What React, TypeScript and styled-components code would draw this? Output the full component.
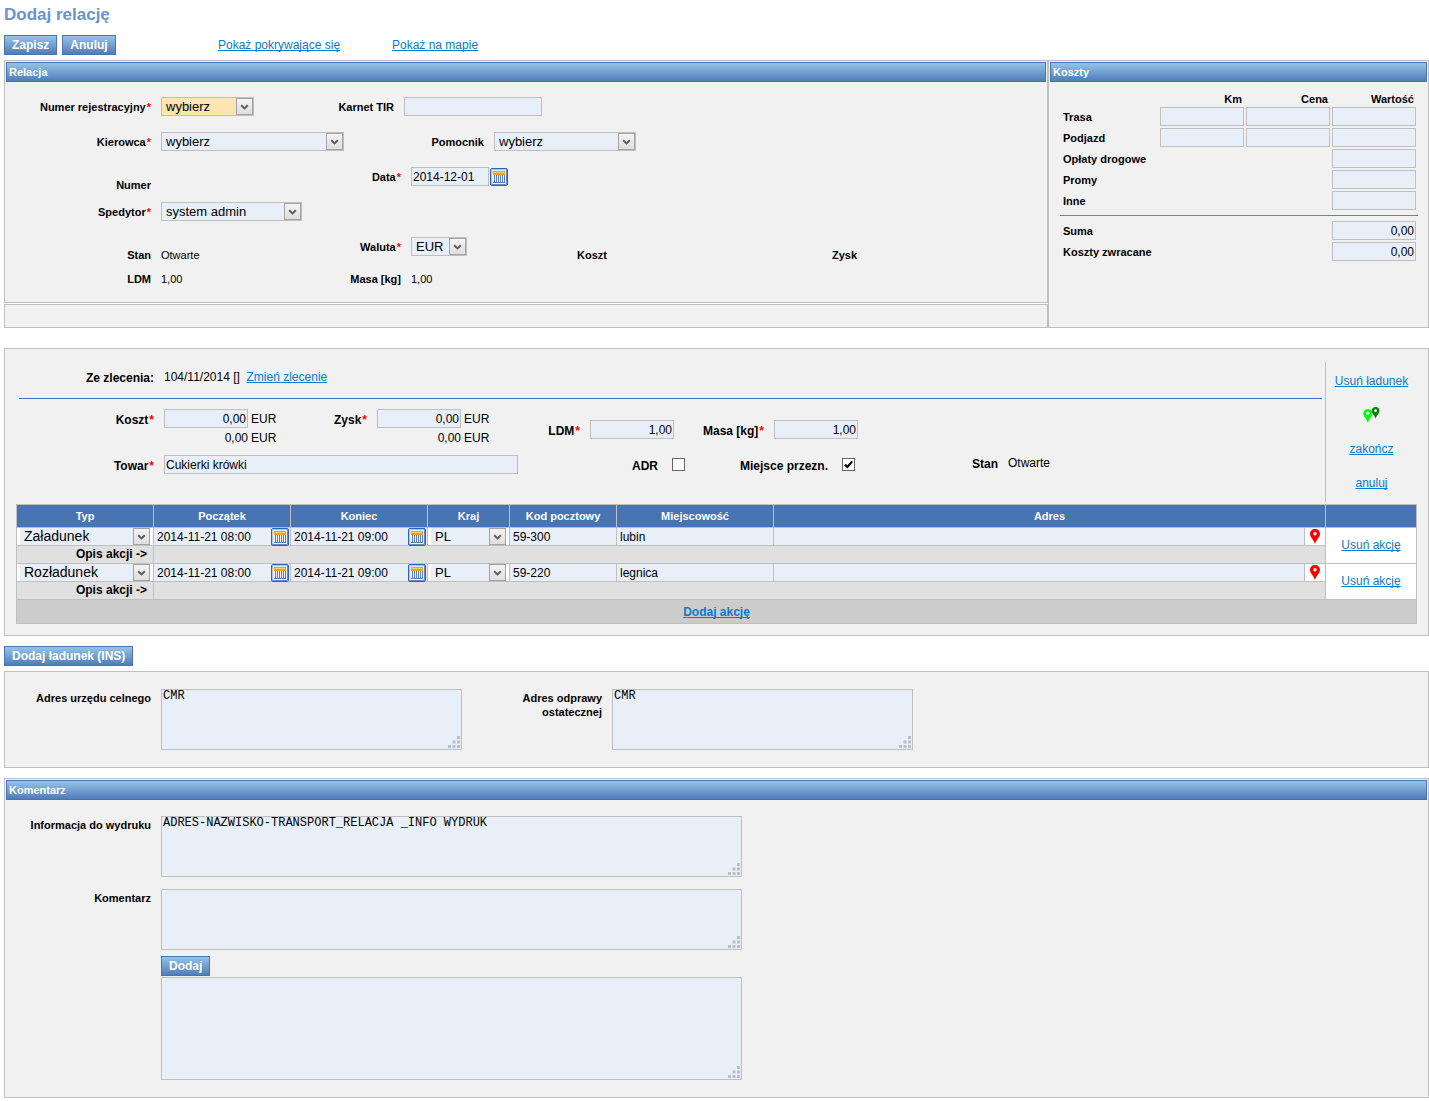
import React, { useId } from "react";
import type { ReactNode } from "react";
import styled, { createGlobalStyle, css } from "styled-components";

const color = {
  line: "#bfbfbf",
  panel: "#f1f1f1",
  field: "#e8eff8",
  blue: "#4874b4",
  link: "#0a7bcc",
};

const GlobalStyle = createGlobalStyle`
  *, *::before, *::after { box-sizing: border-box; }
  body {
    margin: 0;
    background: #fff;
    color: #000;
    font: 12px/14px "Liberation Sans", Arial, sans-serif;
  }
  input, select, textarea, button { font-family: inherit; color: inherit; margin: 0; }
`;

const Page = styled.form`
  padding: 5px 0 3px 4px;
`;

const Title = styled.h1`
  margin: 0 0 10px;
  font-size: 17px;
  line-height: 20px;
  color: #6a92d0;
`;

const Toolbar = styled.div`
  display: grid;
  grid-template-columns: 214px 174px auto;
  justify-content: start;
  align-items: center;
  margin-bottom: 5px;
`;

const ButtonGroup = styled.div`
  display: flex;
  gap: 5px;
`;

const gradient = css`
  border: 1px solid ${color.blue};
  background: linear-gradient(#94c4e6, #4f7cba);
  color: #fff;
  font-weight: bold;
`;

const Button = styled.button`
  && { ${gradient} }
  height: 20px;
  padding: 0 7px;
  font-size: 12px;
  line-height: 16px;
  cursor: pointer;
`;

const Link = styled.a<{ $bold?: boolean }>`
  color: ${color.link};
  font-weight: ${(p) => (p.$bold ? "bold" : "normal")};
  text-decoration: underline;
  text-decoration-skip-ink: none;
`;

const IconButton = styled.button`
  display: inline-flex;
  flex: none;
  padding: 0;
  border: 0;
  background: none;
  cursor: pointer;
`;

const Columns = styled.div`
  display: grid;
  grid-template-columns: minmax(0, 1fr) 381px;
  margin-bottom: 20px;
`;

const Stack = styled.div`
  display: flex;
  flex-direction: column;
  gap: 1px;
`;

const Panel = styled.section`
  padding: 1px;
  border: 1px solid ${color.line};
  background: ${color.panel};
`;

const EmptyPanel = styled(Panel)`
  height: 24px;
`;

const PanelTitle = styled.h2`
  ${gradient}
  height: 20px;
  margin: 0;
  padding: 0 2px;
  font-size: 11px;
  line-height: 18px;
`;

const RouteBody = styled.div`
  padding: 15px 0;
  margin-left: -1px;
`;

const Row = styled.div`
  display: flex;
  align-items: flex-start;
  min-height: 35px;
  &:last-child { min-height: 14px; }
`;

const FieldBox = styled.div<{ $span?: number; $low?: boolean; $top?: boolean }>`
  display: flex;
  flex: none;
  gap: 10px;
  align-items: ${(p) => (p.$top ? "flex-start" : "center")};
  width: ${(p) => (p.$span ? `${p.$span}px` : "auto")};
  padding-top: ${(p) => (p.$low ? "11px" : "0")};
`;

const labelDrop = (size?: number, top?: boolean) => {
  if (size === 12) return top ? 4 : 2;
  return top ? 2 : 0;
};

const Label = styled.label<{ $width: number; $size?: number; $top?: boolean }>`
  flex: none;
  width: ${(p) => p.$width}px;
  padding-top: ${(p) => labelDrop(p.$size, p.$top)}px;
  font-size: ${(p) => p.$size ?? 11}px;
  font-weight: bold;
  text-align: right;
`;

const Star = styled.span`
  margin-left: 1px;
  color: #f00;
`;

const Value = styled.output<{ $small?: boolean }>`
  font-size: ${(p) => (p.$small ? 11 : 12)}px;
`;

const Input = styled.input<{ $width?: string; $right?: boolean }>`
  display: block;
  width: ${(p) => p.$width ?? "84px"};
  height: 19px;
  padding: 0 1px;
  border: 1px solid ${color.line};
  border-radius: 0;
  background: ${color.field};
  font-size: 12px;
  text-align: ${(p) => (p.$right ? "right" : "left")};
`;

const InputWithIcon = styled.span`
  display: flex;
  align-items: center;
  gap: 1px;
`;

const Overlay = styled.span<{ $width?: string }>`
  display: grid;
  flex: none;
  width: ${(p) => p.$width ?? "auto"};
  & > * { grid-area: 1 / 1; }
`;

const SelectBox = styled.select<{ $cell?: boolean; $size: number; $fill?: string }>`
  appearance: none;
  width: 100%;
  height: ${(p) => (p.$cell ? 17 : 19)}px;
  padding: 0 18px 0 4px;
  border: ${(p) => (p.$cell ? "0" : `1px solid ${color.line}`)};
  border-radius: 0;
  background: ${(p) => p.$fill ?? color.field};
  font-size: ${(p) => p.$size}px;
  line-height: 15px;
`;

const Arrow = styled.span<{ $cell?: boolean }>`
  display: flex;
  align-items: center;
  justify-content: center;
  place-self: center end;
  width: 17px;
  height: 17px;
  margin-right: ${(p) => (p.$cell ? 0 : 1)}px;
  border: 1px solid #a3a3a3;
  background: linear-gradient(#f4f4f4, #dedede);
  pointer-events: none;
`;

const AreaBox = styled.textarea<{ $height: number }>`
  display: block;
  width: 100%;
  height: ${(p) => p.$height}px;
  padding: 0 1px;
  border: 1px solid ${color.line};
  border-radius: 0;
  background: ${color.field};
  && { font: 12px/13px "Liberation Mono", "Courier New", monospace; }
  resize: none;
`;

const GripIcon = styled.svg`
  place-self: end;
  margin: 0 2px 2px 0;
  pointer-events: none;
`;

const CheckBox = styled.input`
  appearance: none;
  width: 13px;
  height: 13px;
  border: 1px solid #666;
  background: #fff;
`;

const CheckMark = styled.svg`
  pointer-events: none;
  input:not(:checked) + & { display: none; }
`;

const CheckSlot = styled.span`
  display: flex;
  align-items: center;
  height: 19px;
  padding: 0 4px;
`;

const CostBody = styled.div`
  padding: 9px 9px 0 10px;
`;

const CostTable = styled.table`
  width: 100%;
  table-layout: fixed;
  border-spacing: 2px;
  font-size: 11px;
  td { width: 84px; padding: 0; }
  thead td, thead th { height: 12px; line-height: 12px; padding: 0 2px; width: 84px; text-align: right; }
  tbody th, thead td:first-child { width: auto; padding: 0 1px; text-align: left; }
`;

const CostLine = styled.hr`
  margin: 3px 0;
  border: 0;
  border-top: 1px solid #808080;
`;

const CargoPanel = styled(Panel)`
  padding: 13px 11px 11px;
  margin-bottom: 10px;
`;

const CargoTop = styled.div`
  display: flex;
  min-height: 140px;
  margin-bottom: 2px;
`;

const CargoMain = styled.div`
  flex: 1;
  min-width: 0;
  border-right: 1px solid ${color.line};
`;

const OrderRow = styled.div`
  padding: 7px 0 13px;
`;

const CargoLine = styled.hr`
  margin: 0 3px 10px;
  border: 0;
  border-top: 1px solid ${color.blue};
`;

const AmountRow = styled(Row)`
  min-height: 46px;
`;

const Amount = styled.div`
  display: grid;
  grid-template-columns: 84px auto;
  gap: 3px;
  align-items: center;
`;

const Total = styled.output`
  text-align: right;
`;

const CargoSide = styled.nav`
  display: grid;
  grid-auto-rows: 34px;
  place-items: center;
  width: 91px;
  padding: 2px 0;
`;

const ActionTable = styled.table`
  width: 100%;
  table-layout: fixed;
  border-spacing: 1px;
  background: ${color.line};
  td, th { padding: 0; }
  thead th {
    height: 22px;
    background: ${color.blue};
    color: #fff;
    font-size: 11px;
  }
`;

const Col = styled.col<{ $width?: number }>`
  width: ${(p) => (p.$width ? `${p.$width}px` : "auto")};
`;

const Cell = styled.td<{ $fill?: string; $inset?: boolean }>`
  height: 17px;
  line-height: 17px;
  background: ${(p) => p.$fill ?? color.field};
  text-align: center;
  && { padding: ${(p) => (p.$inset ? "0 3px" : "0")}; }
`;

const NoteHead = styled.th`
  height: 17px;
  background: #e0e0e0;
  line-height: 17px;
  text-align: right;
  && { padding: 0 6px; }
`;

const FootCell = styled.td`
  height: 23px;
  background: #ccc;
  text-align: center;
`;

const CellLine = styled.div<{ $center?: boolean }>`
  display: flex;
  align-items: center;
  justify-content: ${(p) => (p.$center ? "center" : "flex-start")};
  height: 17px;
  padding-right: ${(p) => (p.$center ? 0 : 1)}px;
`;

const CellInput = styled.input`
  display: block;
  flex: 1;
  width: 100%;
  min-width: 0;
  height: 17px;
  padding: 0 3px;
  border: 0;
  background: transparent;
  font-size: 12px;
`;

const CustomsPanel = styled(Panel)`
  display: flex;
  margin: 5px 0 10px;
  padding: 17px 0;
`;

const CommentBody = styled.div`
  padding: 16px 0;
  margin-left: -1px;
`;

const CommentRow = styled.div<{ $gap: number }>`
  margin-bottom: ${(p) => p.$gap}px;
`;

const Indent = styled.div`
  display: flex;
  flex-direction: column;
  align-items: flex-start;
  gap: 1px;
  padding-left: 156px;
`;

function CalendarIcon() {
  return (
    <svg width="18" height="18" viewBox="0 0 18 18" aria-hidden="true">
      <rect x="0.5" y="0.5" width="17" height="17" rx="1.5" fill="#e4eefb" stroke="#2e63b8" />
      <path d="M16.5 1v15.5H1" fill="none" stroke="#5f8cd2" />
      <path d="M1.5 16V1.5H16" fill="none" stroke="#a9c5ee" />
      <path d="M3 3h12v4H3z" fill="#f2a01d" />
      <path d="M4 4h10v1H4z" fill="#fbd068" />
      <path d="M3 7h12v8H3z" fill="#f2f7ff" />
      <path
        d="M4 7h1v7H4zM6 7h1v7H6zM8 7h1v7H8zM10 7h1v7h-1zM12 7h1v7h-1zM14 7h1v7h-1zM3 14h12v1H3z"
        fill="#5a80c2"
      />
    </svg>
  );
}

const pinPath = "M5 0C2.1 0 0 2.1 0 4.9 0 8 3.2 10 5 15 6.8 10 10 8 10 4.9 10 2.1 7.9 0 5 0Z";

function PinIcon() {
  return (
    <svg width="10" height="15" viewBox="0 0 10 15" aria-hidden="true">
      <path d={pinPath} fill="#f00" />
      <circle cx="5" cy="4.7" r="1.7" fill="#fff" />
    </svg>
  );
}

function RouteIcon() {
  return (
    <svg width="17" height="16" viewBox="0 0 17 16" aria-hidden="true">
      <g transform="translate(0.3 2) scale(0.92)">
        <path d={pinPath} fill="#0f0" />
        <circle cx="5" cy="4.7" r="1.8" fill="#fff" />
      </g>
      <g transform="translate(8.7 0) scale(0.78)">
        <path d={pinPath} fill="#088008" />
        <circle cx="5" cy="4.7" r="1.8" fill="#fff" />
      </g>
    </svg>
  );
}

type FieldProps = {
  label: string;
  width: number;
  span?: number;
  size?: number;
  required?: boolean;
  low?: boolean;
  top?: boolean;
  children?: (id: string) => ReactNode;
};

function Field({ label, width, span, size, required, low, top, children }: FieldProps) {
  const id = useId();
  return (
    <FieldBox $span={span} $low={low} $top={top}>
      <Label htmlFor={id} $width={width} $size={size} $top={top}>
        {label}
        {required && <Star>*</Star>}
      </Label>
      {children ? children(id) : <Value id={id} />}
    </FieldBox>
  );
}

type SelectProps = {
  id?: string;
  name?: string;
  value: string;
  width?: string;
  cell?: boolean;
  size?: number;
  fill?: string;
};

function Select({ id, name, value, width, cell, size = 13, fill }: SelectProps) {
  return (
    <Overlay $width={width}>
      <SelectBox id={id} aria-label={name} defaultValue={value} $cell={cell} $size={size} $fill={fill}>
        <option>{value}</option>
      </SelectBox>
      <Arrow $cell={cell}>
        <svg width="9" height="7" viewBox="0 0 9 7" aria-hidden="true">
          <path d="M1.2 2.2 4.5 5.4 7.8 2.2" fill="none" stroke="#5c5c5c" strokeWidth="2" />
        </svg>
      </Arrow>
    </Overlay>
  );
}

type AreaProps = { id?: string; name?: string; value?: string; width: string; height?: number };

function TextArea({ id, name, value, width, height = 61 }: AreaProps) {
  return (
    <Overlay $width={width}>
      <AreaBox id={id} aria-label={name} defaultValue={value} $height={height} spellCheck={false} />
      <GripIcon width="12" height="12" viewBox="0 0 12 12" aria-hidden="true">
        <path
          d="M9 0h3v3H9zM4.5 4.5h3v3h-3zM9 4.5h3v3H9zM0 9h3v3H0zM4.5 9h3v3h-3zM9 9h3v3H9z"
          fill="#b9bfc8"
        />
      </GripIcon>
    </Overlay>
  );
}

function Check({ id, checked }: { id: string; checked?: boolean }) {
  return (
    <CheckSlot>
      <Overlay>
        <CheckBox id={id} type="checkbox" defaultChecked={checked} />
        <CheckMark width="13" height="13" viewBox="0 0 13 13" aria-hidden="true">
          <path d="M3 6.6 5.4 9 10.2 3.4" fill="none" stroke="#000" strokeWidth="2.2" />
        </CheckMark>
      </Overlay>
    </CheckSlot>
  );
}

function CellDate({ name, value }: { name: string; value: string }) {
  return (
    <Cell>
      <CellLine>
        <CellInput aria-label={name} defaultValue={value} />
        <IconButton type="button" aria-label={`${name} – kalendarz`}>
          <CalendarIcon />
        </IconButton>
      </CellLine>
    </Cell>
  );
}

const costRows = [
  { name: "Trasa", full: true },
  { name: "Podjazd", full: true },
  { name: "Opłaty drogowe", full: false },
  { name: "Promy", full: false },
  { name: "Inne", full: false },
];

const actions = [
  { type: "Załadunek", start: "2014-11-21 08:00", end: "2014-11-21 09:00", country: "PL", zip: "59-300", city: "lubin" },
  { type: "Rozładunek", start: "2014-11-21 08:00", end: "2014-11-21 09:00", country: "PL", zip: "59-220", city: "legnica" },
];

function RoutePanel() {
  return (
    <Panel>
      <PanelTitle>Relacja</PanelTitle>
      <RouteBody>
        <Row>
          <Field label="Numer rejestracyjny" required width={146} span={250}>
            {(id) => <Select id={id} value="wybierz" width="93px" fill="#fae6ae" />}
          </Field>
          <Field label="Karnet TIR" width={139}>
            {(id) => <Input id={id} $width="138px" />}
          </Field>
        </Row>
        <Row>
          <Field label="Kierowca" required width={146} span={250}>
            {(id) => <Select id={id} value="wybierz" width="183px" />}
          </Field>
          <Field label="Pomocnik" width={229}>
            {(id) => <Select id={id} value="wybierz" width="142px" />}
          </Field>
        </Row>
        <Row>
          <Field label="Numer" width={146} span={250} low />
          <Field label="Data" required width={146}>
            {(id) => (
              <InputWithIcon>
                <Input id={id} $width="78px" defaultValue="2014-12-01" />
                <IconButton type="button" aria-label="Data – kalendarz">
                  <CalendarIcon />
                </IconButton>
              </InputWithIcon>
            )}
          </Field>
        </Row>
        <Row>
          <Field label="Spedytor" required width={146}>
            {(id) => <Select id={id} value="system admin" width="141px" />}
          </Field>
        </Row>
        <Row>
          <Field label="Stan" width={146} span={250} low>
            {(id) => <Value id={id} $small>Otwarte</Value>}
          </Field>
          <Field label="Waluta" required width={146} span={250}>
            {(id) => <Select id={id} value="EUR" width="56px" />}
          </Field>
          <Field label="Koszt" width={102} span={250} low />
          <Field label="Zysk" width={102} low />
        </Row>
        <Row>
          <Field label="LDM" width={146} span={250}>
            {(id) => <Value id={id} $small>1,00</Value>}
          </Field>
          <Field label="Masa [kg]" width={146}>
            {(id) => <Value id={id} $small>1,00</Value>}
          </Field>
        </Row>
      </RouteBody>
    </Panel>
  );
}

function CostPanel() {
  return (
    <Panel>
      <PanelTitle>Koszty</PanelTitle>
      <CostBody>
        <CostTable>
          <thead>
            <tr>
              <td />
              <th>Km</th>
              <th>Cena</th>
              <th>Wartość</th>
            </tr>
          </thead>
          <tbody>
            {costRows.map((row) => (
              <tr key={row.name}>
                <th colSpan={row.full ? 1 : 3}>{row.name}</th>
                {row.full && (
                  <>
                    <td><Input $right aria-label={`${row.name} km`} /></td>
                    <td><Input $right aria-label={`${row.name} cena`} /></td>
                  </>
                )}
                <td><Input $right aria-label={`${row.name} wartość`} /></td>
              </tr>
            ))}
          </tbody>
        </CostTable>
        <CostLine />
        <CostTable>
          <tbody>
            {["Suma", "Koszty zwracane"].map((name) => (
              <tr key={name}>
                <th>{name}</th>
                <td><Input $right aria-label={name} defaultValue="0,00" /></td>
              </tr>
            ))}
          </tbody>
        </CostTable>
      </CostBody>
    </Panel>
  );
}

function AmountField({ label, width, span }: { label: string; width: number; span: number }) {
  const id = useId();
  return (
    <FieldBox $span={span} $top>
      <Label htmlFor={id} $width={width} $size={12} $top>
        {label}
        <Star>*</Star>
      </Label>
      <Amount>
        <Input id={id} $right defaultValue="0,00" />
        <span>EUR</span>
        <Total>0,00</Total>
        <span>EUR</span>
      </Amount>
    </FieldBox>
  );
}

function ActionsTable() {
  return (
    <ActionTable>
      <colgroup>
        <Col $width={136} />
        <Col $width={136} />
        <Col $width={136} />
        <Col $width={81} />
        <Col $width={106} />
        <Col $width={156} />
        <Col />
        <Col $width={20} />
        <Col $width={90} />
      </colgroup>
      <thead>
        <tr>
          <th>Typ</th>
          <th>Początek</th>
          <th>Koniec</th>
          <th>Kraj</th>
          <th>Kod pocztowy</th>
          <th>Miejscowość</th>
          <th colSpan={2}>Adres</th>
          <th />
        </tr>
      </thead>
      <tbody>
        {actions.map((a) => (
          <React.Fragment key={a.type}>
            <tr>
              <Cell $fill="#fff" $inset>
                <Select cell name="Typ" value={a.type} size={14} />
              </Cell>
              <CellDate name="Początek" value={a.start} />
              <CellDate name="Koniec" value={a.end} />
              <Cell $fill="#fff" $inset>
                <Select cell name="Kraj" value={a.country} />
              </Cell>
              <Cell><CellInput aria-label="Kod pocztowy" defaultValue={a.zip} /></Cell>
              <Cell><CellInput aria-label="Miejscowość" defaultValue={a.city} /></Cell>
              <Cell><CellInput aria-label="Adres" /></Cell>
              <Cell $fill="#fff">
                <CellLine $center>
                  <IconButton type="button" aria-label="Pokaż adres na mapie"><PinIcon /></IconButton>
                </CellLine>
              </Cell>
              <Cell rowSpan={2} $fill="#fff"><Link href="#usun-akcje">Usuń akcję</Link></Cell>
            </tr>
            <tr>
              <NoteHead scope="row">Opis akcji -&gt;</NoteHead>
              <Cell colSpan={7} $fill="#e0e0e0"><CellInput aria-label="Opis akcji" /></Cell>
            </tr>
          </React.Fragment>
        ))}
        <tr>
          <FootCell colSpan={9}><Link $bold href="#dodaj-akcje">Dodaj akcję</Link></FootCell>
        </tr>
      </tbody>
    </ActionTable>
  );
}

function Cargo() {
  return (
    <CargoPanel>
      <CargoTop>
        <CargoMain>
          <OrderRow>
            <Field label="Ze zlecenia:" width={138} size={12}>
              {(id) => (
                <span>
                  <Value id={id}>104/11/2014 []</Value>&nbsp; <Link href="#zmien-zlecenie">Zmień zlecenie</Link>
                </span>
              )}
            </Field>
          </OrderRow>
          <CargoLine />
          <AmountRow>
            <AmountField label="Koszt" width={138} span={262} />
            <AmountField label="Zysk" width={89} span={213} />
            <Field label="LDM" required width={89} span={184} size={12} low>
              {(id) => <Input id={id} $right defaultValue="1,00" />}
            </Field>
            <Field label="Masa [kg]" required width={89} size={12} low>
              {(id) => <Input id={id} $right defaultValue="1,00" />}
            </Field>
          </AmountRow>
          <Row>
            <Field label="Towar" required width={138} span={553} size={12}>
              {(id) => <Input id={id} $width="354px" defaultValue="Cukierki krówki" />}
            </Field>
            <Field label="ADR" width={89} span={170} size={12}>
              {(id) => <Check id={id} />}
            </Field>
            <Field label="Miejsce przezn." width={89} span={170} size={12}>
              {(id) => <Check id={id} checked />}
            </Field>
            <Field label="Stan" width={89} size={12}>
              {(id) => <Value id={id}>Otwarte</Value>}
            </Field>
          </Row>
        </CargoMain>
        <CargoSide>
          <Link href="#usun-ladunek">Usuń ładunek</Link>
          <IconButton type="button" aria-label="Pokaż trasę na mapie"><RouteIcon /></IconButton>
          <Link href="#zakoncz">zakończ</Link>
          <Link href="#anuluj">anuluj</Link>
        </CargoSide>
      </CargoTop>
      <ActionsTable />
    </CargoPanel>
  );
}

export default function App() {
  return (
    <>
      <GlobalStyle />
      <Page onSubmit={(e) => e.preventDefault()}>
        <Title>Dodaj relację</Title>
        <Toolbar>
          <ButtonGroup>
            <Button type="submit">Zapisz</Button>
            <Button type="button">Anuluj</Button>
          </ButtonGroup>
          <span><Link href="#pokrywajace">Pokaż pokrywające się</Link></span>
          <span><Link href="#mapa">Pokaż na mapie</Link></span>
        </Toolbar>
        <Columns>
          <Stack>
            <RoutePanel />
            <EmptyPanel />
          </Stack>
          <CostPanel />
        </Columns>
        <Cargo />
        <ButtonGroup>
          <Button type="button">Dodaj ładunek (INS)</Button>
        </ButtonGroup>
        <CustomsPanel>
          <Field label="Adres urzędu celnego" width={146} span={500} top>
            {(id) => <TextArea id={id} value="CMR" width="301px" />}
          </Field>
          <Field label="Adres odprawy ostatecznej" width={97} top>
            {(id) => <TextArea id={id} value="CMR" width="301px" />}
          </Field>
        </CustomsPanel>
        <Panel>
          <PanelTitle>Komentarz</PanelTitle>
          <CommentBody>
            <CommentRow $gap={12}>
              <Field label="Informacja do wydruku" width={146} top>
                {(id) => (
                  <TextArea id={id} value="ADRES-NAZWISKO-TRANSPORT_RELACJA _INFO WYDRUK" width="581px" />
                )}
              </Field>
            </CommentRow>
            <CommentRow $gap={6}>
              <Field label="Komentarz" width={146} top>
                {(id) => <TextArea id={id} width="581px" />}
              </Field>
            </CommentRow>
            <Indent>
              <Button type="button">Dodaj</Button>
              <TextArea name="Lista komentarzy" width="581px" height={103} />
            </Indent>
          </CommentBody>
        </Panel>
      </Page>
    </>
  );
}
